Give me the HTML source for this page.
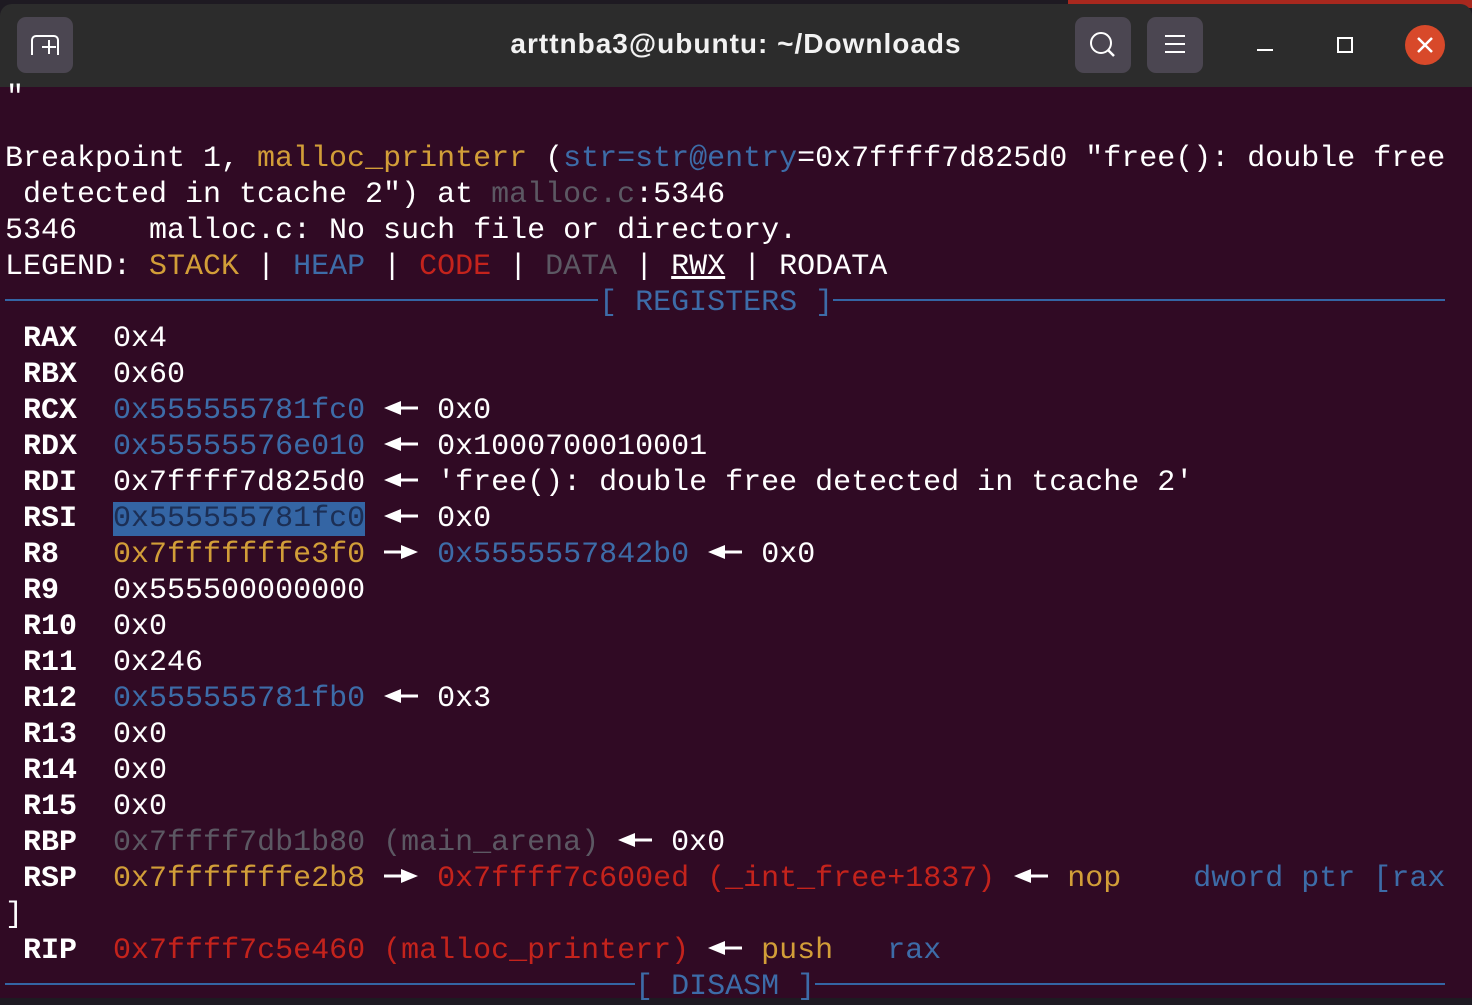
<!DOCTYPE html>
<html><head><meta charset="utf-8"><style>
*{margin:0;padding:0;box-sizing:border-box}
body{width:1472px;height:998px;background:#1e1a22;overflow:hidden;position:relative}
#tb{position:absolute;left:0;top:4px;width:1472px;height:83px;background:#2c2c2c;border-radius:12px 12px 0 0}
#deskr{position:absolute;left:1068px;top:0;width:404px;height:8px;background:#a8281e}
#term{position:absolute;left:0;top:87px;width:1472px;height:911px;background:#300a24}
.btn{position:absolute;top:17px;width:56px;height:56px;background:#4b4651;border-radius:9px}
#title{position:absolute;left:0;width:1472px;top:28px;text-align:center;color:#f2f2f2;font:bold 28px "Liberation Sans",sans-serif;letter-spacing:1px}
pre{position:absolute;left:5px;top:141px;font:30px/36px "Liberation Mono","DejaVu Sans Mono",monospace;color:#fff;white-space:pre}
.y{color:#d29e38}.b{color:#3d6ca8}.r{color:#c4231c}.g{color:#5c5863}
.k{font-weight:bold}
.ar{display:inline-block;width:36px;height:36px;vertical-align:top;position:relative}
.ar svg{position:absolute;left:0;top:-3px}
.hl{background:#3465a4;color:#1c2f55}
.sep{position:absolute;height:2px;background:#3465a4}
</style></head><body>
<div id="deskr"></div>
<div id="tb"></div>
<div id="term"></div>
<div class="btn" style="left:17px"><svg width="56" height="56"><path d="M15 38V23a4 4 0 0 1 4-4h18a4 4 0 0 1 4 4v15" fill="none" stroke="#fff" stroke-width="2"/><path d="M32 23v14M25 30h14" stroke="#fff" stroke-width="2"/></svg></div>
<div id="title">arttnba3@ubuntu: ~/Downloads</div>
<div class="btn" style="left:1075px"><svg width="56" height="56"><circle cx="26" cy="26" r="10" fill="none" stroke="#fff" stroke-width="2"/><path d="M33 33l6 6" stroke="#fff" stroke-width="2.5"/></svg></div>
<div class="btn" style="left:1147px"><svg width="56" height="56"><path d="M18 19h20M18 27h20M18 35h20" stroke="#fff" stroke-width="2"/></svg></div>
<div style="position:absolute;left:1257px;top:49px;width:16px;height:2px;background:#fff"></div>
<div style="position:absolute;left:1337px;top:37px;width:16px;height:16px;border:2px solid #fff"></div>
<div style="position:absolute;left:1405px;top:25px;width:40px;height:40px;border-radius:50%;background:#d8492a"><svg width="40" height="40"><path d="M13 13l14 14M27 13l-14 14" stroke="#fff" stroke-width="2.5"/></svg></div>
<div style="position:absolute;left:6px;top:88px;color:#fff;font:30px/20px 'Liberation Mono',monospace">"</div>
<div class="sep" style="left:5px;top:299px;width:593px"></div>
<div class="sep" style="left:833px;top:299px;width:612px"></div>
<div class="sep" style="left:5px;top:983px;width:630px"></div>
<div class="sep" style="left:815px;top:983px;width:630px"></div>
<pre>Breakpoint 1, <span class="y">malloc_printerr</span> (<span class="b">str=str@entry</span>=0x7ffff7d825d0 "free(): double free
 detected in tcache 2") at <span class="g">malloc.c</span>:5346
5346    malloc.c: No such file or directory.
LEGEND: <span class="y">STACK</span> | <span class="b">HEAP</span> | <span class="r">CODE</span> | <span class="g">DATA</span> | <u>RWX</u> | RODATA
                                 <span class="b">[ REGISTERS ]</span>
 <span class="k">RAX</span>  0x4
 <span class="k">RBX</span>  0x60
 <span class="k">RCX</span>  <span class="b">0x555555781fc0</span> <span class="ar"><svg width="36" height="36"><path d="M1 18l17-7v14z" fill="#fff"/><path d="M16 18h19" stroke="#fff" stroke-width="3"/></svg></span> 0x0
 <span class="k">RDX</span>  <span class="b">0x55555576e010</span> <span class="ar"><svg width="36" height="36"><path d="M1 18l17-7v14z" fill="#fff"/><path d="M16 18h19" stroke="#fff" stroke-width="3"/></svg></span> 0x1000700010001
 <span class="k">RDI</span>  0x7ffff7d825d0 <span class="ar"><svg width="36" height="36"><path d="M1 18l17-7v14z" fill="#fff"/><path d="M16 18h19" stroke="#fff" stroke-width="3"/></svg></span> 'free(): double free detected in tcache 2'
 <span class="k">RSI</span>  <span class="hl">0x555555781fc0</span> <span class="ar"><svg width="36" height="36"><path d="M1 18l17-7v14z" fill="#fff"/><path d="M16 18h19" stroke="#fff" stroke-width="3"/></svg></span> 0x0
 <span class="k">R8 </span>  <span class="y">0x7fffffffe3f0</span> <span class="ar"><svg width="36" height="36"><path d="M35 18l-17-7v14z" fill="#fff"/><path d="M1 18h19" stroke="#fff" stroke-width="3"/></svg></span> <span class="b">0x5555557842b0</span> <span class="ar"><svg width="36" height="36"><path d="M1 18l17-7v14z" fill="#fff"/><path d="M16 18h19" stroke="#fff" stroke-width="3"/></svg></span> 0x0
 <span class="k">R9 </span>  0x555500000000
 <span class="k">R10</span>  0x0
 <span class="k">R11</span>  0x246
 <span class="k">R12</span>  <span class="b">0x555555781fb0</span> <span class="ar"><svg width="36" height="36"><path d="M1 18l17-7v14z" fill="#fff"/><path d="M16 18h19" stroke="#fff" stroke-width="3"/></svg></span> 0x3
 <span class="k">R13</span>  0x0
 <span class="k">R14</span>  0x0
 <span class="k">R15</span>  0x0
 <span class="k">RBP</span>  <span class="g">0x7ffff7db1b80 (main_arena)</span> <span class="ar"><svg width="36" height="36"><path d="M1 18l17-7v14z" fill="#fff"/><path d="M16 18h19" stroke="#fff" stroke-width="3"/></svg></span> 0x0
 <span class="k">RSP</span>  <span class="y">0x7fffffffe2b8</span> <span class="ar"><svg width="36" height="36"><path d="M35 18l-17-7v14z" fill="#fff"/><path d="M1 18h19" stroke="#fff" stroke-width="3"/></svg></span> <span class="r">0x7ffff7c600ed (_int_free+1837)</span> <span class="ar"><svg width="36" height="36"><path d="M1 18l17-7v14z" fill="#fff"/><path d="M16 18h19" stroke="#fff" stroke-width="3"/></svg></span> <span class="y">nop</span>    <span class="b">dword ptr [rax</span>
]
 <span class="k">RIP</span>  <span class="r">0x7ffff7c5e460 (malloc_printerr)</span> <span class="ar"><svg width="36" height="36"><path d="M1 18l17-7v14z" fill="#fff"/><path d="M16 18h19" stroke="#fff" stroke-width="3"/></svg></span> <span class="y">push</span>   <span class="b">rax</span>
                                   <span class="b">[ DISASM ]</span></pre>
</body></html>
